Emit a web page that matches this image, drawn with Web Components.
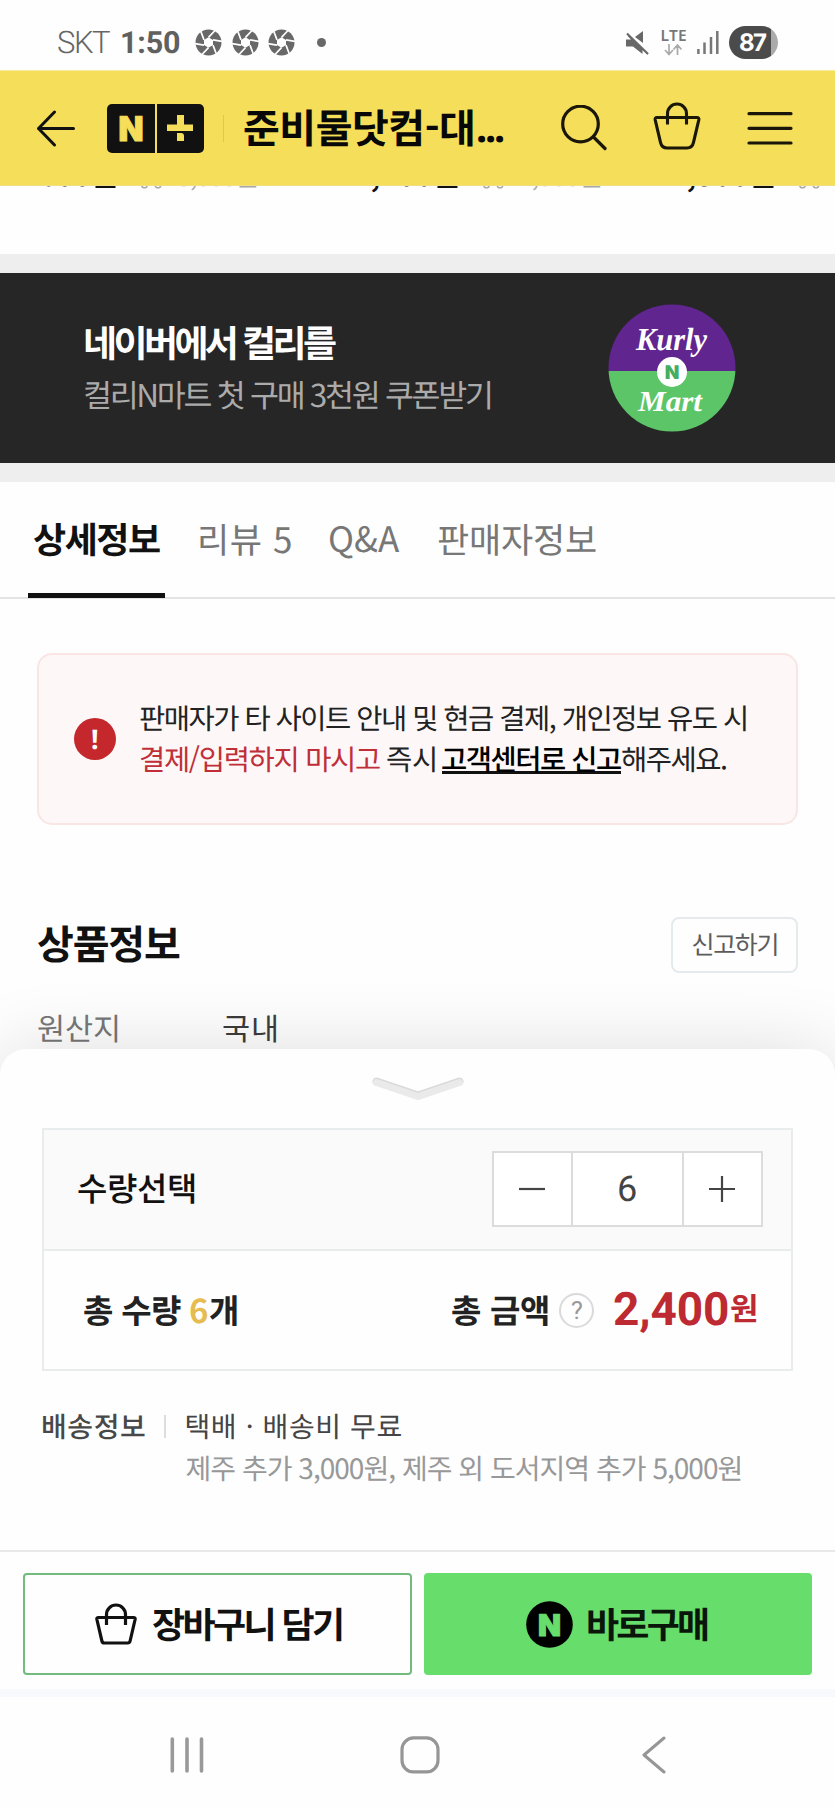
<!DOCTYPE html>
<html lang="ko">
<head>
<meta charset="utf-8">
<title>준비물닷컴</title>
<style>
html,body{margin:0;padding:0;background:#fefefe}
body{width:835px;height:1809px;overflow:hidden;font-family:"Noto Sans CJK KR",sans-serif;color:#111;text-rendering:geometricPrecision}
</style>
</head>
<body>
<shop-page></shop-page>
<script>
const define = (name, html, setup) => {
  const tpl = document.createElement('template');
  tpl.innerHTML = html;
  customElements.define(name, class extends HTMLElement {
    constructor() {
      super();
      this.attachShadow({ mode: 'open' }).append(tpl.content.cloneNode(true));
    }
    connectedCallback() { if (setup) setup.call(this); }
  });
};

const icons = {
  aperture: [27, 27, `<circle cx="13.5" cy="13.5" r="13" fill="#686868"/><path d="M13.5 8.3l4.5 2.6v5.2l-4.5 2.6-4.5-2.6v-5.2z" fill="#fff"/><path d="M13.5 8.3L20.5 1M18 10.9L27.5 12.5M18 16.1L21.5 25.5M13.5 18.7L6.5 26M9 16.1L-.5 14.500M9 10.900L5.500 1.500" stroke="#fff" stroke-width="1.700" fill="none"/>`],
  mute: [24, 24, `<path d="M0 8.500h5L1.500 4.800 3 3.300 23 22l-1.500 1.500-5-4.500v4L7 15.500H0z" fill="#686868"/><path d="M9 6L17 0v12z" fill="#686868"/><path d="M1.500 1.500L23 22.500" stroke="#fefefe" stroke-width="1.500"/><path d="M1 2.500L22 23" stroke="#686868" stroke-width="2"/>`],
  updown: [19, 12, `<path d="M5 0v10M1 6l4 4.500L9 6M13.500 11V1M9.500 5.500l4-4.500 4 4.500" stroke="#aaa" stroke-width="1.700" fill="none"/>`],
  signal: [22, 23, `<path d="M1.400 23v-5M7.500 23V11.500M14 23V6M20.300 23V0" stroke="#777" stroke-width="2.500"/>`],
  back: [38, 37, `<path d="M36.500 18.500H1.500M17.500 2L1.500 18.500l16 16.500" stroke="#111" stroke-width="3" stroke-linecap="round" stroke-linejoin="round" fill="none"/>`],
  search: [46, 46, `<circle cx="19.500" cy="19" r="17.800" fill="none" stroke="#1a1708" stroke-width="3.200"/><path d="M32.500 32L44 43.500" stroke="#1a1708" stroke-width="3.200" stroke-linecap="round"/>`],
  basket: [48, 48, `<path d="M4 15.500h40q2.300 0 1.800 2.400l-5.300 22.500q-1.200 5.600-6.500 5.600H14q-5.300 0-6.500-5.600L2.200 17.900q-.5-2.400 1.800-2.400zM14.500 22.500V11.500a9.500 9.500 0 0 1 19 0v11" fill="none" stroke="#1a1708" stroke-width="3.100"/>`],
  menu: [46, 34, `<path d="M2 2.700h42M2 17.300h42M2 32h42" stroke="#1a1708" stroke-width="3.200" stroke-linecap="round"/>`],
  truck: [28, 18, `<path d="M5 14H1.500V1.500h15V14H10M16.500 5.500h6l4 4.500v4h-3M18.500 14H16" fill="none" stroke="#aaa" stroke-width="1.500"/><circle cx="7.500" cy="14" r="2.800" fill="none" stroke="#aaa" stroke-width="1.500"/><circle cx="21" cy="14" r="2.800" fill="none" stroke="#aaa" stroke-width="1.500"/>`],
  basketSmall: [42, 42, `<path d="M3.500 14.500h35q2 0 1.600 2l-5 21.500q-.5 2-2.500 2H9.400q-2 0-2.500-2l-5-21.500q-.4-2 1.600-2zM11.500 22V11.500a9.500 9.500 0 0 1 19 0V22" fill="none" stroke="#111" stroke-width="3.200"/>`],
  handle: [92, 26, `<path d="M4.500 5.500L46 19.500 87.500 5.500" fill="none" stroke="#d9d9d9" stroke-width="8" stroke-linecap="round" stroke-linejoin="round"/><path d="M4.500 6.500L46 20.500 87.500 6.500" fill="none" stroke="#eaeaea" stroke-width="7" stroke-linecap="round" stroke-linejoin="round"/>`],
  minus: [26, 26, `<path d="M0 13h26" stroke="#444" stroke-width="2.200"/>`],
  plus: [26, 26, `<path d="M0 13h26M13 0v26" stroke="#444" stroke-width="2.200"/>`],
  recents: [34, 36, `<path d="M2.300 2v32M17 2v32M31.500 2v32" stroke="#999" stroke-width="3.600" stroke-linecap="round"/>`],
  home: [40, 38, `<rect x="2" y="1.900" width="36" height="34" rx="11.500" fill="none" stroke="#969696" stroke-width="3.200"/>`],
  prev: [24, 38, `<path d="M22 2L2 19l20 17" fill="none" stroke="#969696" stroke-width="3" stroke-linecap="round" stroke-linejoin="round"/>`]
};
define('ui-icon', `<style>:host{display:block;flex:none}svg{display:block}</style><svg></svg>`, function () {
  const [w, h, body] = icons[this.getAttribute('name')];
  const svg = this.shadowRoot.querySelector('svg');
  svg.setAttribute('width', w);
  svg.setAttribute('height', h);
  svg.setAttribute('viewBox', `0 0 ${w} ${h}`);
  svg.innerHTML = body;
});

define('status-bar', `<style>
:host{display:flex;box-sizing:border-box;height:70px;align-items:center;padding:15px 57px 0 58px}
.left{display:flex;align-items:center;flex:1}
.apps{display:flex;gap:9.500px;margin-left:15px}
.dot{width:9px;height:9px;border-radius:50%;background:#686868;margin-left:22px}
.lte{display:grid;justify-items:center;gap:3px;margin:0 11px 0 12px}
.battery{width:49px;height:33px;border-radius:17px;margin-left:10px;background:linear-gradient(90deg,#4b4b4b 42px,#ababab 42px);display:flex;align-items:center;padding-left:11px;box-sizing:border-box}
</style>
<div class="left"><ui-text font="Roboto" weight="300" size="31" w="52" color="#666">SKT</ui-text>
<ui-text font="Roboto" weight="700" size="30.500" w="58" color="#606060" style="margin-left:12px">1:50</ui-text>
<div class="apps"><ui-icon name="aperture"></ui-icon><ui-icon name="aperture"></ui-icon><ui-icon name="aperture"></ui-icon></div><div class="dot"></div></div>
<ui-icon name="mute"></ui-icon>
<div class="lte"><ui-text font="Noto Sans" weight="600" size="15.500" w="24.500" color="#777">LTE</ui-text><ui-icon name="updown"></ui-icon></div>
<ui-icon name="signal"></ui-icon>
<div class="battery"><ui-text font="Inter" weight="700" size="24" w="27" color="#fff">87</ui-text></div>`);

define('plus-logo', `<style>
:host{display:grid;flex:none;grid-template-columns:48px 47px;gap:2px}
.n,.p{height:49px;background:#111;display:grid;place-items:center}
.n{border-radius:5px 0 0 5px}.p{border-radius:0 5px 5px 0}
svg{display:block}
</style><div class="n"><svg width="48" height="49"><text x="24" y="37" text-anchor="middle" textLength="25" lengthAdjust="spacingAndGlyphs" font-family="Inter" font-weight="900" font-size="34" fill="#f5de59" stroke="#f5de59">N</text></svg></div>
<div class="p"><svg width="26" height="26"><path d="M10 0h7v9.500h9v6.500H0V9.500h10zM10 18h4q3 0 3 3v5h-7z" fill="#f5de59"/></svg></div>`);

define('store-header', `<style>
:host{display:flex;box-sizing:border-box;height:116px;align-items:center;padding:0 42px 0 36.500px;background:#f5de59;border-bottom:1px solid #efdf80;border-top:1px solid #f6ea9f;position:relative}
plus-logo{margin-left:32px}
.rule{width:1.500px;height:27px;background:#dfc84c;margin:0 20px 0 19px}
.tools{display:flex;align-items:center;flex:1;justify-content:flex-end;gap:46px}
</style>
<ui-icon name="back"></ui-icon><plus-logo></plus-logo><div class="rule"></div>
<ui-text size="40" weight="700" w="229" color="#080808">준비물닷컴-대</ui-text>
<ui-text font="Noto Sans" size="40" weight="700" w="26" color="#080808" style="margin:22px 0 0 5px">...</ui-text>
<div class="tools"><ui-icon name="search"></ui-icon><ui-icon name="basket" style="margin-top:-4px"></ui-icon><ui-icon name="menu"></ui-icon></div>`);

define('price-strip', `<style>
:host{display:block;height:68px;overflow:hidden}
.row{display:flex;align-items:baseline;margin-top:-25px;padding-left:40px;width:1100px}
ui-icon{margin:0 12px 0 21px;align-self:flex-start;padding-top:10px}
.gap{width:97px}
</style>
<div class="row"><ui-text size="29" weight="700" w="76">600원</ui-text><ui-icon name="truck"></ui-icon><ui-text size="26" w="80" color="#aaa">3,000원</ui-text><div class="gap"></div>
<ui-text size="29" weight="700" w="104">2,100원</ui-text><ui-icon name="truck"></ui-icon><ui-text size="26" w="82" color="#aaa">2,500원</ui-text><div class="gap" style="width:69px"></div>
<ui-text size="29" weight="700" w="104">2,300원</ui-text><ui-icon name="truck"></ui-icon></div>`);

define('promo-banner', `<style>
:host{display:flex;box-sizing:border-box;height:228px;align-items:center;justify-content:space-between;padding:0 99px 0 85px;background:#262626;border-top:19px solid #eee;border-bottom:19px solid #eee}
.copy{display:grid;gap:19px;margin-top:-1px}
svg{display:block}
.seal{font:italic 700 32px "Liberation Serif",serif}
</style>
<div class="copy"><ui-text size="37" weight="700" w="251" color="#fff">네이버에서 컬리를</ui-text><ui-text size="31.500" w="405" color="#ababab">컬리N마트 첫 구매 3천원 쿠폰받기</ui-text></div>
<svg width="128" height="128"><clipPath id="c"><circle cx="64" cy="64" r="63.500"/></clipPath><g clip-path="url(#c)"><path d="M0 0h128v67H0z" fill="#60258f"/><path d="M0 67h128v61H0z" fill="#5bc568"/></g>
<text class="seal" x="28" y="46" textLength="71" lengthAdjust="spacingAndGlyphs" fill="#fff">Kurly</text>
<circle cx="64" cy="68" r="15" fill="#fff"/><text x="64" y="75" text-anchor="middle" font-family="Inter" font-size="19" font-weight="900" fill="#45ad61">N</text>
<text class="seal" x="30" y="107" textLength="64" lengthAdjust="spacingAndGlyphs" fill="#fff" style="font-size:29px">Mart</text></svg>`);

define('info-tabs', `<style>
:host{display:flex;box-sizing:border-box;height:117px;padding-left:28px;border-bottom:2px solid #e3e3e3}
::slotted(*){display:flex;align-items:center;padding-top:5px!important;margin-bottom:-1px;box-sizing:border-box}
</style><slot></slot>`);
define('info-tab', `<style>
:host{border-bottom:5px solid transparent;padding:0 5px}
:host([active]){border-bottom-color:#111}
</style><slot></slot>`);

define('safety-alert', `<style>
:host{display:flex;box-sizing:border-box;align-items:center;width:761px;height:172px;margin:54px 0 0 37px;padding-left:35px;border:2px solid #f9e6e4;border-radius:15px;background:#fdf7f7}
.mark{flex:none;width:42px;height:42px;border-radius:50%;background:#c4272c;display:grid;place-items:center}
.lines{display:grid;gap:11px;margin:4px 0 0 24px}
</style><div class="mark"><ui-text size="27" weight="700" color="#fff" font="Noto Sans">!</ui-text></div><div class="lines"><slot></slot></div>`);

define('product-info', `<style>
:host{display:block;padding:92px 37px 0}
.head{display:flex;justify-content:space-between;align-items:center}
.btn{box-sizing:border-box;width:127px;height:56px;border:2px solid #e5eaec;border-radius:8px;display:grid;place-items:center}
.row{display:flex;margin-top:41px;height:34px}
</style>
<div class="head"><ui-text size="40" weight="700" w="142" style="margin:-2px 0 0 1px">상품정보</ui-text><div class="btn"><ui-text size="25" w="84" color="#5c5c5c">신고하기</ui-text></div></div>
<div class="row"><ui-text size="30.500" w="80" color="#777" style="margin-left:1px">원산지</ui-text><ui-text size="30.500" w="53" color="#3c3c3c" style="margin-left:105px">국내</ui-text></div>`);

define('quantity-stepper', `<style>
:host{display:grid;flex:none;box-sizing:border-box;width:271px;height:76px;grid-template-columns:77px 1fr 77px;border:2px solid #dcdcdc;background:#fff}
div{display:grid;place-items:center}
.b{padding-right:2px}
.v{border:solid #dcdcdc;border-width:0 2px}
</style><div class="b"><ui-icon name="minus"></ui-icon></div><div class="v"><ui-text font="Roboto" size="36" color="#444">6</ui-text></div><div class="b"><ui-icon name="plus"></ui-icon></div>`);

define('purchase-sheet', `<style>
:host{display:block;box-sizing:border-box;height:501px;padding:27px 42px 0;background:#fefefe;border-radius:26px 26px 0 0;box-shadow:0 4px 78px rgba(0,0,0,.14);position:relative}
.handle{display:grid;justify-content:center}
.box{margin-top:26px;width:747px;border:2px solid #e9ecec}
.row{display:flex;align-items:center;box-sizing:border-box}
.qty{height:121px;background:#fafafa;border-bottom:2px solid #e9ecec;padding:0 28px 1px 34px;justify-content:space-between}
.sum{height:118px;padding:1px 33px 0 40px}
.count,.won{display:flex;align-items:baseline}
.count{flex:1}
.won{padding-top:4px}
.help{width:35px;height:35px;box-sizing:border-box;border:2px solid #dadada;border-radius:50%;display:grid;place-items:center;margin:0 20px 0 11px}
.ship{display:flex;margin-top:42px}
.ship i{width:1.500px;height:23px;background:#ddd;margin:2px 21px 0 19px}
.lines{display:grid;gap:15px}
</style>
<div class="handle"><ui-icon name="handle"></ui-icon></div>
<div class="box"><div class="row qty"><ui-text size="33" weight="500" w="117" color="#111">수량선택</ui-text><quantity-stepper></quantity-stepper></div>
<div class="row sum"><div class="count"><ui-text size="33" weight="700" w="97" color="#222">총 수량</ui-text><ui-text size="33" weight="700" color="#e6bc50" w="17" style="margin-left:9px">6</ui-text><ui-text size="33" weight="700" w="28" color="#222" style="margin-left:2px">개</ui-text></div>
<ui-text size="33" weight="700" w="96" color="#222">총 금액</ui-text><div class="help"><ui-text font="Roboto" size="25" color="#999">?</ui-text></div>
<div class="won"><ui-text font="Roboto" size="46" weight="700" w="114" color="#bd2a31">2,400</ui-text><ui-text size="31" weight="700" w="27" color="#bd2a31" style="margin:3px 0 0 3px;align-self:flex-start">원</ui-text></div></div></div>
<div class="ship"><ui-text size="28" weight="500" w="102" color="#484848" style="margin-left:1px">배송정보</ui-text><i></i><div class="lines"><ui-text size="28" w="215" color="#444">택배 · 배송비 무료</ui-text><ui-text size="28" w="554" color="#989898">제주 추가 3,000원, 제주 외 도서지역 추가 5,000원</ui-text></div></div>`);

define('action-bar', `<style>
:host{display:grid;grid-template-columns:389px 388px;gap:12px;box-sizing:border-box;height:147px;padding:21px 23px 0;border-top:2px solid #e8e8e8;border-bottom:8px solid #f7f9fc;background:#fefefe;position:relative}
.b{height:102px;box-sizing:border-box;border-radius:4px;display:flex;align-items:center}
.b ui-text{margin-top:2px}
.cart{border:2px solid #72bb7c;padding-left:70px}
.buy{background:#67dd6c;padding-left:102px}
</style>
<div class="b cart"><ui-icon name="basketSmall"></ui-icon><ui-text size="36" weight="700" w="189" style="margin-left:16px">장바구니 담기</ui-text></div>
<div class="b buy"><svg width="47" height="47"><circle cx="23.500" cy="23.500" r="23.300"/><text x="23.500" y="34.500" text-anchor="middle" textLength="23" lengthAdjust="spacingAndGlyphs" font-family="Inter" font-weight="900" font-size="30" fill="#67dd6c" stroke="#67dd6c">N</text></svg><ui-text size="36" weight="700" w="120" color="#0a160a" style="margin-left:15px">바로구매</ui-text></div>`);

define('system-nav', `<style>
:host{display:flex;align-items:center;height:112px;padding:4px 0 0 170px;background:#fefefe;box-sizing:border-box}
</style><ui-icon name="recents"></ui-icon><ui-icon name="home" style="margin-left:196px"></ui-icon><ui-icon name="prev" style="margin-left:202px"></ui-icon>`);

define('shop-page', `<style>
:host{display:flex;flex-direction:column;width:835px;height:1809px;overflow:hidden}
:host>*{flex:none}
.line{display:flex;align-items:baseline}
product-info{height:224px;box-sizing:border-box}
u{display:block;text-decoration:none;background:linear-gradient(#111,#111) 0 100%/100% 3px no-repeat;padding-bottom:1px;margin:0 0 -1px 7px}
</style>
<status-bar></status-bar><store-header></store-header><price-strip></price-strip><promo-banner></promo-banner>
<info-tabs>
<info-tab active><ui-text size="36" weight="700" w="127">상세정보</ui-text></info-tab>
<info-tab style="margin-left:30px"><ui-text size="35" w="91" color="#777">리뷰 5</ui-text></info-tab>
<info-tab style="margin-left:29px"><ui-text size="35" w="70" color="#777" style="margin-top:4px">Q&amp;A</ui-text></info-tab>
<info-tab style="margin-left:28px"><ui-text size="35" w="158" color="#777">판매자정보</ui-text></info-tab>
</info-tabs>
<safety-alert><ui-text size="28.500" w="606" color="#222">판매자가 타 사이트 안내 및 현금 결제, 개인정보 유도 시</ui-text>
<div class="line"><ui-text size="28.500" w="240" color="#c02f38">결제/입력하지 마시고</ui-text><ui-text size="28.500" w="48" color="#222" style="margin-left:7px">즉시</ui-text><u><ui-text size="28.500" weight="500" w="179" color="#000">고객센터로 신고</ui-text></u><ui-text size="28.500" w="104" color="#222" style="margin-left:1px">해주세요.</ui-text></div></safety-alert>
<product-info></product-info><purchase-sheet></purchase-sheet><action-bar></action-bar><system-nav></system-nav>`);

/* One line of text whose box hugs its ink; tracking is tuned so the line fills w.
   Registered last, so every instance is already laid out when it is measured. */
const pen = document.createElement('canvas').getContext('2d');
pen.textRendering = 'geometricPrecision';
define('ui-text', `<style>
:host{display:flow-root;flex:none;white-space:pre}
span{display:block}
</style><span><slot></slot></span>`, function () {
  const get = (n, d) => this.getAttribute(n) || d;
  const size = +get('size', 30), weight = get('weight', 400);
  const family = get('font', '') ? `"${get('font')}","Noto Sans CJK KR",sans-serif` : '"Noto Sans CJK KR",sans-serif';
  const text = this.textContent, width = +get('w', 0);
  pen.font = `${weight} ${size}px ${family}`;
  const m = pen.measureText(text);
  const ink = m.actualBoundingBoxLeft + m.actualBoundingBoxRight;
  const h = m.actualBoundingBoxAscent + m.actualBoundingBoxDescent;
  const base = h / 2 + (m.fontBoundingBoxAscent - m.fontBoundingBoxDescent) / 2;
  const s = this.shadowRoot.querySelector('span').style;
  this.style.width = (width || ink) + 'px';
  this.style.height = h + 'px';
  if (get('color', '')) this.style.color = get('color');
  s.font = `${weight} ${size}px/${h}px ${family}`;
  s.marginLeft = m.actualBoundingBoxLeft + 'px';
  s.marginTop = (m.actualBoundingBoxAscent - base) + 'px';
  if (width && text.length > 1) {
    const range = document.createRange();
    range.selectNodeContents(this);
    let track = (width - ink) / (text.length - 1);
    for (let i = 0; i < 3; i++) {
      s.letterSpacing = track + 'px';
      const drawn = range.getBoundingClientRect().width - track - (m.width - ink);
      track += (width - drawn) / (text.length - 1);
    }
    s.letterSpacing = track + 'px';
  }
});
</script>
</body>
</html>
